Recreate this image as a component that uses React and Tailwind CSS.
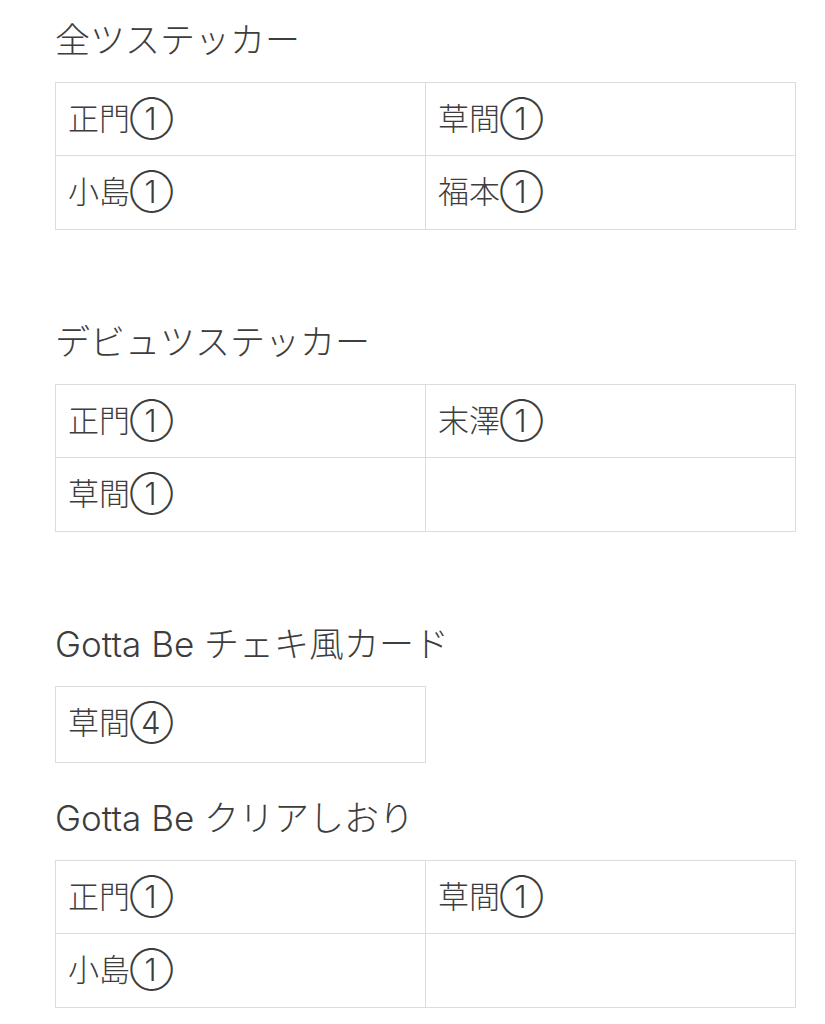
const sections = [
  { title: "全ツステッカー", rows: [["正門①", "草間①"], ["小島①", "福本①"]], gap: "mt-[88px]" },
  { title: "デビュツステッカー", rows: [["正門①", "末澤①"], ["草間①", ""]], gap: "mt-[88px]" },
  { title: "Gotta Be チェキ風カード", rows: [["草間④"]], single: true, gap: "mt-[31px]" },
  { title: "Gotta Be クリアしおり", rows: [["正門①", "草間①"], ["小島①", ""]] },
];

const Cell = ({ text, first }) => (
  <div className={`flex-1 px-[12px] pt-[14px] ${first ? "" : "border-l border-[#dcdcdc]"}`}>
    {text}
  </div>
);

export default function App() {
  return (
    <div
      className="min-h-screen bg-white text-[#3d3d3d] pt-[16px] pl-[55px] pr-[30px] font-light"
      style={{ fontFamily: '"Inter", "Noto Sans CJK JP", sans-serif' }}
    >
      {sections.map((s, i) => (
        <section key={i}>
          <h2 className="h-[48px] leading-[48px] text-[35px] font-light mb-[18px]">{s.title}</h2>
          <div
            className={`border border-[#dcdcdc] text-[31px] leading-[44px] ${
              s.single ? "w-[371px]" : "w-[741px]"
            }`}
          >
            {s.rows.map((r, j) => (
              <div
                key={j}
                className={`flex ${j > 0 ? "border-t border-[#dcdcdc]" : ""} ${
                  s.rows.length === 1 ? "h-[75px]" : j === 0 ? "h-[72px]" : "h-[74px]"
                }`}
              >
                {r.map((t, k) => (
                  <Cell key={k} text={t} first={k === 0} />
                ))}
              </div>
            ))}
          </div>
          {s.gap && <div className={s.gap} />}
        </section>
      ))}
    </div>
  );
}
